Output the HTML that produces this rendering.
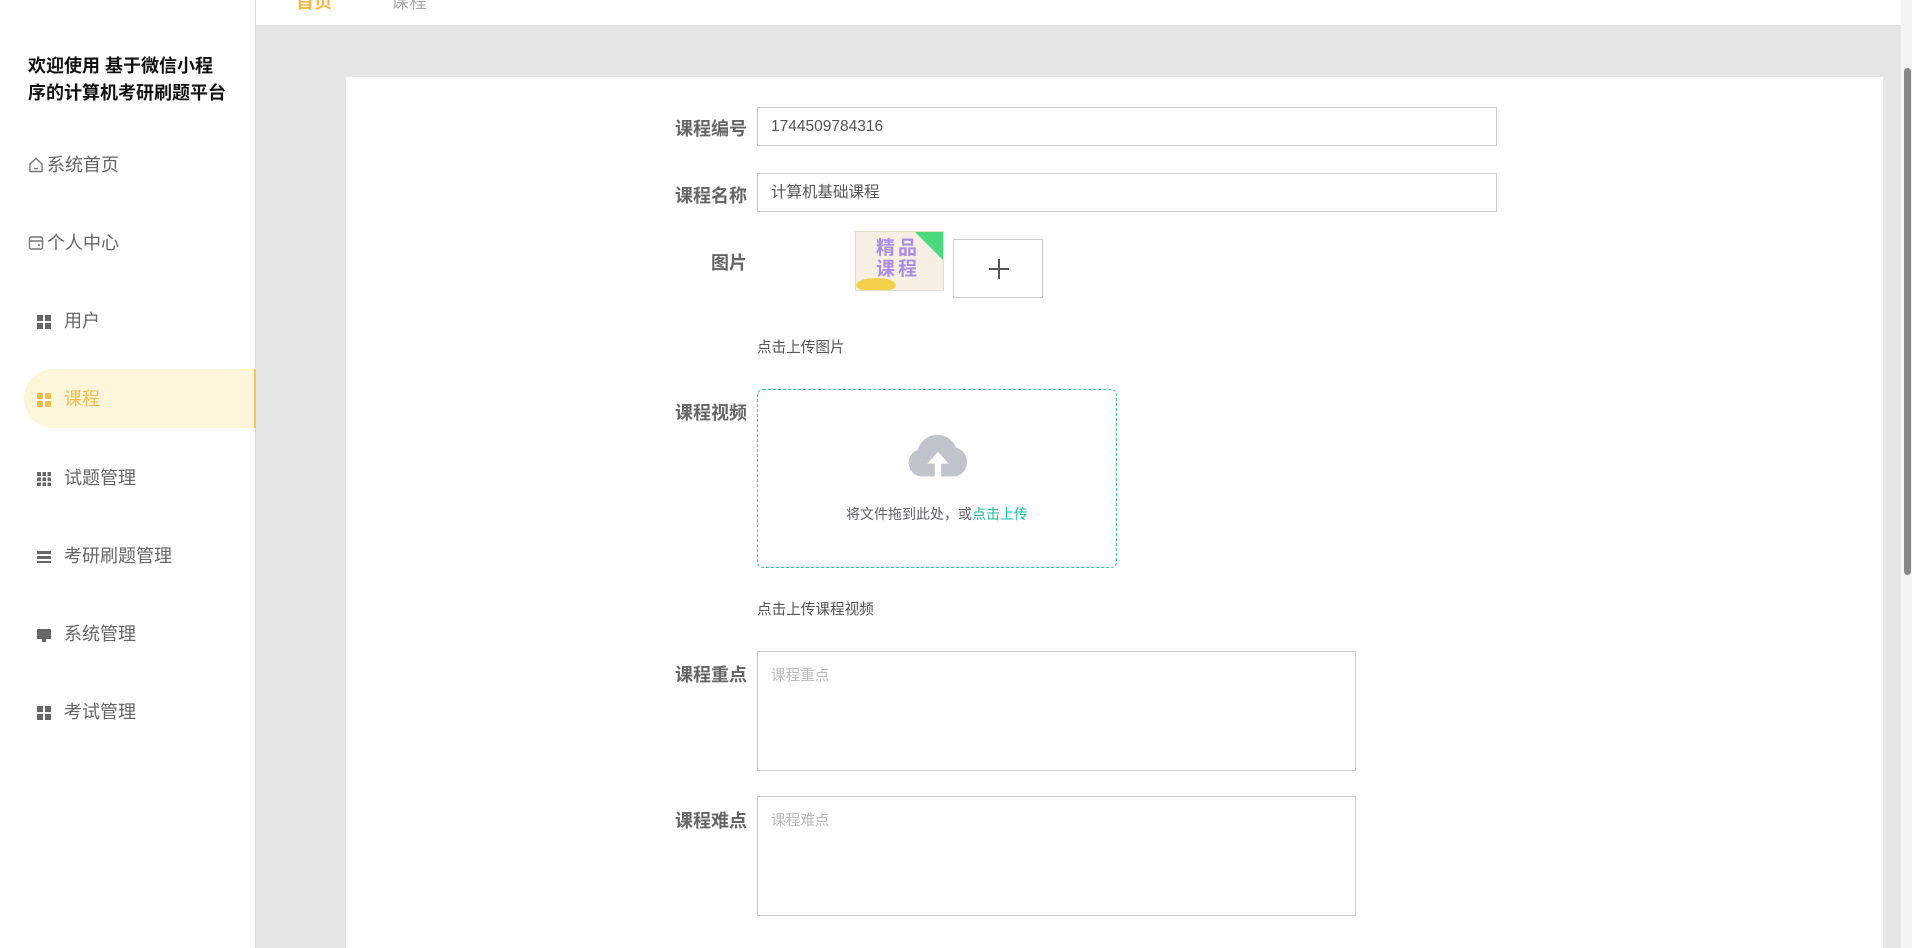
<!DOCTYPE html>
<html><head><meta charset="utf-8"><style>
*{margin:0;padding:0;box-sizing:border-box}
body{width:1912px;height:948px;overflow:hidden;background:#e6e6e6;font-family:"Liberation Sans","Noto Sans CJK SC",sans-serif;position:relative}
.a{position:absolute}
.side{left:0;top:0;width:256px;height:948px;background:#fff;border-right:1px solid #ddd}
.title{left:28px;top:53px;font-size:18px;font-weight:bold;line-height:27px;color:#111;white-space:nowrap}
.mi{left:0;width:256px;height:40px;line-height:40px;font-size:18px;color:#666}
.lbl{width:120px;text-align:right;font-size:18px;font-weight:bold;color:#666}
.inp{left:757px;width:740px;height:39px;border:1px solid #ccc;font-size:15.5px;color:#555;padding-left:13px;line-height:37px}
.ta{left:757px;width:599px;height:120px;border:1px solid #ccc;font-size:14.6px;color:#bbb;padding:12px 13px}
.hint{left:757px;font-size:14.6px;color:#555}
.g{display:inline-block;width:14px;height:14px;background:
linear-gradient(#fff,#fff) 6px 0/2px 14px no-repeat,linear-gradient(#fff,#fff) 0 6px/14px 2px no-repeat,#666;vertical-align:middle}
</style></head><body>
<div class="a" style="left:256px;top:0;width:1645px;height:26px;background:#fff;border-bottom:1px solid #ddd"></div>
<div class="a" style="left:296px;top:-12px;font-size:18px;font-weight:bold;color:#f5b944">首页</div>
<div class="a" style="left:391px;top:-12px;font-size:18px;color:#aaa">课程</div>
<div class="a" style="left:1901px;top:0;width:11px;height:948px;background:#f4f4f4"></div>
<div class="a" style="left:1904px;top:68px;width:7px;height:507px;background:#888;border-radius:4px"></div>

<div class="a side"></div>
<div class="a title">欢迎使用 基于微信小程<br>序的计算机考研刷题平台</div>
<div class="a mi" style="top:145px;padding-left:28px"><svg width="16" height="16" viewBox="0 0 16 16" style="vertical-align:-2px;margin-right:3px"><path d="M2 7 L8 1.5 L14 7 V14.5 H2Z M6 11 Q8 12.5 10 11" fill="none" stroke="#777" stroke-width="1.4"/></svg>系统首页</div>
<div class="a mi" style="top:223px;padding-left:28px"><svg width="16" height="16" viewBox="0 0 16 16" style="vertical-align:-2px;margin-right:3px"><rect x="1.5" y="2" width="13" height="12" rx="1.5" fill="none" stroke="#777" stroke-width="1.4"/><path d="M1.5 6 H14.5 M10 10 H12" stroke="#777" stroke-width="1.4"/></svg>个人中心</div>
<div class="a mi" style="top:301px;padding-left:37px"><span class="g"></span><span style="margin-left:13px">用户</span></div>
<div class="a" style="left:24px;top:369px;width:232px;height:59px;background:#fef6da;border-radius:30px 0 0 30px;border-right:2px solid #f5c659"></div>
<div class="a mi" style="top:379px;padding-left:37px;color:#f2bd4d"><span class="g" style="background-color:#f2bd4d"></span><span style="margin-left:13px">课程</span></div>
<div class="a mi" style="top:458px;padding-left:37px"><span class="g" style="background:linear-gradient(#fff,#fff) 4px 0/1.5px 14px no-repeat,linear-gradient(#fff,#fff) 9px 0/1.5px 14px no-repeat,linear-gradient(#fff,#fff) 0 4px/14px 1.5px no-repeat,linear-gradient(#fff,#fff) 0 9px/14px 1.5px no-repeat,#666"></span><span style="margin-left:13px">试题管理</span></div>
<div class="a mi" style="top:536px;padding-left:37px"><span class="g" style="height:12px;background:linear-gradient(#fff,#fff) 0 3px/14px 2px no-repeat,linear-gradient(#fff,#fff) 0 8px/14px 2px no-repeat,#666"></span><span style="margin-left:13px">考研刷题管理</span></div>
<div class="a mi" style="top:614px;padding-left:37px"><span class="g" style="height:13px;background:linear-gradient(#fff,#fff) 0 10px/5px 3px no-repeat,linear-gradient(#fff,#fff) 9px 10px/5px 3px no-repeat,#666"></span><span style="margin-left:13px">系统管理</span></div>
<div class="a mi" style="top:692px;padding-left:37px"><span class="g"></span><span style="margin-left:13px">考试管理</span></div>

<div class="a" style="left:346px;top:77px;width:1537px;height:871px;background:#fff"></div>

<div class="a lbl" style="left:627px;top:115px">课程编号</div>
<div class="a inp" style="top:107px">1744509784316</div>
<div class="a lbl" style="left:627px;top:182px">课程名称</div>
<div class="a inp" style="top:173px">计算机基础课程</div>
<div class="a lbl" style="left:627px;top:249px">图片</div>
<div class="a" style="left:855px;top:231px;width:89px;height:60px;background:#f7efe3;border:1px solid #e5dccd;overflow:hidden">
<div class="a" style="right:0;top:0;width:0;height:0;border-top:28px solid #4cd97e;border-left:28px solid transparent"></div>
<div class="a" style="left:20px;top:6px;font-size:19px;font-weight:bold;line-height:21px;color:#a98de6;letter-spacing:3px">精品<br>课程</div>
<div class="a" style="left:0;top:46px;width:40px;height:14px;background:#f3d24a;border-radius:50%"></div></div>
<div class="a" style="left:953px;top:239px;width:90px;height:59px;border:1px solid #ccc"><div class="a" style="left:35px;top:28px;width:20px;height:1.5px;background:#555"></div><div class="a" style="left:44px;top:19px;width:1.5px;height:20px;background:#555"></div></div>
<div class="a hint" style="top:336px">点击上传图片</div>

<div class="a lbl" style="left:627px;top:399px">课程视频</div>
<div class="a" style="left:757px;top:389px;width:360px;height:179px;border:1px dashed #3cc8a2;border-radius:6px"></div>
<svg class="a" style="left:905px;top:428px" width="66" height="52" viewBox="0 0 62 48"><path d="M14 45 A13 13 0 0 1 12 20 A19 19 0 0 1 48 18 A14 14 0 0 1 48 45Z" fill="#c0c4cc"/><path d="M31 22 L21 33 H28 V46 H34 V33 H41Z" fill="#fff"/></svg>
<div class="a" style="left:757px;width:360px;top:504px;text-align:center;font-size:14px;color:#606266">将文件拖到此处，或<span style="color:#1abc9c">点击上传</span></div>
<div class="a hint" style="top:598px">点击上传课程视频</div>

<div class="a lbl" style="left:627px;top:661px">课程重点</div>
<div class="a ta" style="top:651px">课程重点</div>
<div class="a lbl" style="left:627px;top:807px">课程难点</div>
<div class="a ta" style="top:796px">课程难点</div>
</body></html>
